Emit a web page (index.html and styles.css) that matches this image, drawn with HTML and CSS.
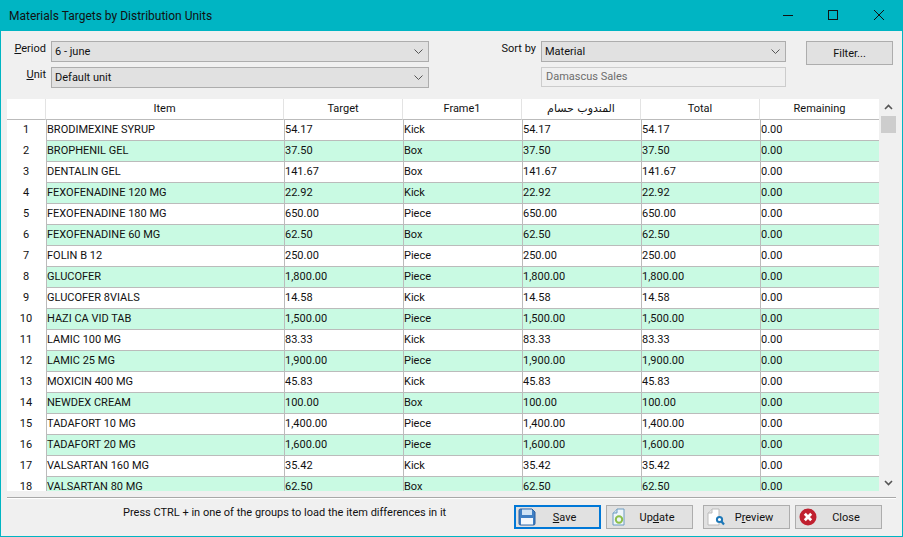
FILE: index.html
```html
<!DOCTYPE html>
<html>
<head>
    <title>Materials Targets by Distribution Units</title>
    <link rel="stylesheet" href="styles.css">
</head>
<body>
<div class="window">
    <div class="titlebar">
        <span class="title">Materials Targets by Distribution Units</span>
        <div class="win-buttons">
            <svg width="11" height="11" viewBox="0 0 11 11"><path d="M1 5.5H11" stroke="#111" fill="none"/></svg>
            <svg width="11" height="11" viewBox="0 0 11 11"><rect x="0.5" y="0.5" width="9" height="9" stroke="#111" fill="none"/></svg>
            <svg width="11" height="11" viewBox="0 0 11 11"><path d="M0 0L10 10M10 0L0 10" stroke="#111" fill="none"/></svg>
        </div>
    </div>

    <div class="filters">
        <label class="lbl"><u>P</u>eriod</label>
        <div class="combo"><span>6 - june</span><svg class="chev" width="9" height="5" viewBox="0 0 9 5"><path d="M0.5 0.5L4.5 4.5L8.5 0.5" stroke="#555" fill="none"/></svg></div>
        <label class="lbl">Sort by</label>
        <div class="combo"><span>Material</span><svg class="chev" width="9" height="5" viewBox="0 0 9 5"><path d="M0.5 0.5L4.5 4.5L8.5 0.5" stroke="#555" fill="none"/></svg></div>
        <button class="btn filter-btn">Filter...</button>

        <label class="lbl"><u>U</u>nit</label>
        <div class="combo"><span>Default unit</span><svg class="chev" width="9" height="5" viewBox="0 0 9 5"><path d="M0.5 0.5L4.5 4.5L8.5 0.5" stroke="#555" fill="none"/></svg></div>
        <span></span>
        <div class="readonly">Damascus Sales</div>
    </div>

    <div class="grid-wrap">
        <div class="grid-clip">
            <table class="grid">
                <colgroup>
                    <col class="c-num"><col class="c-item"><col class="c-val"><col class="c-val"><col class="c-val"><col class="c-val"><col class="c-val">
                </colgroup>
                <thead>
                    <tr><th></th><th>Item</th><th>Target</th><th>Frame1</th><th class="ar">المندوب حسام</th><th>Total</th><th>Remaining</th></tr>
                </thead>
                <tbody>
                    <tr><th>1</th><td>BRODIMEXINE SYRUP</td><td>54.17</td><td>Kick</td><td>54.17</td><td>54.17</td><td>0.00</td></tr>
                    <tr class="alt"><th>2</th><td>BROPHENIL GEL</td><td>37.50</td><td>Box</td><td>37.50</td><td>37.50</td><td>0.00</td></tr>
                    <tr><th>3</th><td>DENTALIN GEL</td><td>141.67</td><td>Box</td><td>141.67</td><td>141.67</td><td>0.00</td></tr>
                    <tr class="alt"><th>4</th><td>FEXOFENADINE 120 MG</td><td>22.92</td><td>Kick</td><td>22.92</td><td>22.92</td><td>0.00</td></tr>
                    <tr><th>5</th><td>FEXOFENADINE 180 MG</td><td>650.00</td><td>Piece</td><td>650.00</td><td>650.00</td><td>0.00</td></tr>
                    <tr class="alt"><th>6</th><td>FEXOFENADINE 60 MG</td><td>62.50</td><td>Box</td><td>62.50</td><td>62.50</td><td>0.00</td></tr>
                    <tr><th>7</th><td>FOLIN B 12</td><td>250.00</td><td>Piece</td><td>250.00</td><td>250.00</td><td>0.00</td></tr>
                    <tr class="alt"><th>8</th><td>GLUCOFER</td><td>1,800.00</td><td>Piece</td><td>1,800.00</td><td>1,800.00</td><td>0.00</td></tr>
                    <tr><th>9</th><td>GLUCOFER 8VIALS</td><td>14.58</td><td>Kick</td><td>14.58</td><td>14.58</td><td>0.00</td></tr>
                    <tr class="alt"><th>10</th><td>HAZI CA VID TAB</td><td>1,500.00</td><td>Piece</td><td>1,500.00</td><td>1,500.00</td><td>0.00</td></tr>
                    <tr><th>11</th><td>LAMIC 100 MG</td><td>83.33</td><td>Kick</td><td>83.33</td><td>83.33</td><td>0.00</td></tr>
                    <tr class="alt"><th>12</th><td>LAMIC 25 MG</td><td>1,900.00</td><td>Piece</td><td>1,900.00</td><td>1,900.00</td><td>0.00</td></tr>
                    <tr><th>13</th><td>MOXICIN 400 MG</td><td>45.83</td><td>Kick</td><td>45.83</td><td>45.83</td><td>0.00</td></tr>
                    <tr class="alt"><th>14</th><td>NEWDEX CREAM</td><td>100.00</td><td>Box</td><td>100.00</td><td>100.00</td><td>0.00</td></tr>
                    <tr><th>15</th><td>TADAFORT 10 MG</td><td>1,400.00</td><td>Piece</td><td>1,400.00</td><td>1,400.00</td><td>0.00</td></tr>
                    <tr class="alt"><th>16</th><td>TADAFORT 20 MG</td><td>1,600.00</td><td>Piece</td><td>1,600.00</td><td>1,600.00</td><td>0.00</td></tr>
                    <tr><th>17</th><td>VALSARTAN 160 MG</td><td>35.42</td><td>Kick</td><td>35.42</td><td>35.42</td><td>0.00</td></tr>
                    <tr class="alt"><th>18</th><td>VALSARTAN 80 MG</td><td>62.50</td><td>Box</td><td>62.50</td><td>62.50</td><td>0.00</td></tr>
                </tbody>
            </table>
        </div>
        <div class="scrollbar">
            <svg width="9" height="6" viewBox="0 0 9 6"><path d="M1 5L4.5 1.5L8 5" stroke="#555" stroke-width="1.6" fill="none"/></svg>
            <div class="thumb"></div>
            <div class="track"></div>
            <svg width="9" height="6" viewBox="0 0 9 6"><path d="M1 1L4.5 4.5L8 1" stroke="#555" stroke-width="1.6" fill="none"/></svg>
        </div>
    </div>

    <div class="separator"></div>

    <div class="footer">
        <p class="hint">Press CTRL + in one of the groups to load the item differences in it</p>
        <div class="actions">
            <button class="btn act default">
                <svg width="18" height="18" viewBox="0 0 18 18"><path d="M1 2.5A1.5 1.5 0 0 1 2.5 1H14L17 4V15.5A1.5 1.5 0 0 1 15.5 17H2.5A1.5 1.5 0 0 1 1 15.5Z" fill="#3f7fc4" stroke="#2a5f9e"/><rect x="4" y="1.5" width="10" height="5.5" fill="#cfe3f5"/><rect x="3" y="10" width="12" height="6.5" fill="#f4f8fc"/></svg>
                <span><u>S</u>ave</span>
            </button>
            <button class="btn act">
                <svg width="18" height="18" viewBox="0 0 18 18"><path d="M3 5L7 1H14V17H3Z" fill="#eef5fa" stroke="#6d9cc0"/><path d="M3 5H7V1" fill="#cfe0ec" stroke="#6d9cc0"/><circle cx="9" cy="11.5" r="3.2" fill="none" stroke="#8cbf4a" stroke-width="2"/></svg>
                <span>Up<u>d</u>ate</span>
            </button>
            <button class="btn act gap-left">
                <svg width="18" height="18" viewBox="0 0 18 18"><path d="M1 5L5 1H12V17H1Z" fill="#fff" stroke="#bbb"/><path d="M1 5H5V1" fill="#e4e4e4" stroke="#bbb"/><circle cx="12.5" cy="11.5" r="2.6" fill="#fff" stroke="#1d78b8" stroke-width="2"/><path d="M14.5 13.5L17 16.5" stroke="#1d78b8" stroke-width="2.2"/></svg>
                <span>P<u>r</u>eview</span>
            </button>
            <button class="btn act">
                <svg width="18" height="18" viewBox="0 0 18 18"><circle cx="9" cy="9" r="8.5" fill="#c0202f"/><path d="M5.8 5.8L12.2 12.2M12.2 5.8L5.8 12.2" stroke="#fff" stroke-width="2.8"/></svg>
                <span>Close</span>
            </button>
        </div>
    </div>
</div>
</body>
</html>
```

FILE: styles.css
```css
* {
    margin: 0;
    padding: 0;
    box-sizing: border-box;
}

body {
    font-family: Roboto, "DejaVu Sans", sans-serif;
    font-size: 11px;
    color: #111;
    background-color: #f0f0f0;
    overflow: hidden;
}

.window {
    width: 903px;
    height: 537px;
    border: 1px solid #00b5c3;
    border-top: 0;
    background-color: #f0f0f0;
    display: flex;
    flex-direction: column;
}

.titlebar {
    height: 31px;
    margin: 0 -1px;
    padding-left: 9px;
    background-color: #00b5c3;
    display: flex;
    align-items: center;
    justify-content: space-between;
    flex-shrink: 0;
}

.title {
    font-size: 12px;
}

.win-buttons {
    display: flex;
    gap: 35px;
    padding-right: 18px;
}

.filters {
    display: grid;
    grid-template-columns: 38px 378px 102px 245px 102px;
    grid-template-rows: 21px 21px;
    column-gap: 5px;
    row-gap: 5px;
    padding: 10px 0 0 7px;
    height: 67px;
    flex-shrink: 0;
}

.lbl {
    text-align: right;
    line-height: 16px;
    white-space: nowrap;
}

.combo {
    border: 1px solid #adadad;
    background-color: #e1e1e1;
    display: flex;
    align-items: center;
    justify-content: space-between;
    padding: 0 5px 0 3px;
}

.readonly {
    height: 20px;
    border: 1px solid #ccc;
    background-color: #f0f0f0;
    color: #6d6d6d;
    padding-left: 4px;
    line-height: 17px;
}

.btn {
    font-family: inherit;
    font-size: 11px;
    color: #111;
    border: 1px solid #adadad;
    background-color: #e1e1e1;
}

.filter-btn {
    width: 87px;
    height: 24px;
    justify-self: end;
}

.grid-wrap {
    display: flex;
    height: 392px;
    margin-left: 6px;
    margin-top: 1px;
    flex-shrink: 0;
}

.grid-clip {
    width: 873px;
    height: 392px;
    overflow: hidden;
}

.grid {
    width: 872px;
    table-layout: fixed;
    border-collapse: separate;
    border-spacing: 0;
}

.c-num { width: 39px; }
.c-item { width: 238px; }
.c-val { width: 119px; }

.grid thead th {
    height: 21px;
    font-weight: normal;
    background-color: #fff;
    border-right: 1px solid #e3e3e3;
    border-bottom: 1px solid #bbb;
    padding-bottom: 1px;
}

.grid thead th:last-child {
    border-right: 0;
}

.grid tbody th {
    font-weight: normal;
    background-color: #fff;
    height: 21px;
    padding: 0 1px 2px 0;
}

.grid td {
    height: 21px;
    padding: 0 0 1px 0;
    background-color: #fff;
    border-left: 1px solid #bbb;
    border-bottom: 1px solid #bbb;
    white-space: nowrap;
    overflow: hidden;
}

.grid tr.alt td {
    background-color: #c9fae3;
}

.ar {
    font-family: "DejaVu Sans", sans-serif;
}

.scrollbar {
    width: 16px;
    margin-left: 0;
    display: flex;
    flex-direction: column;
    align-items: center;
}

.scrollbar svg {
    flex-shrink: 0;
    margin: 5px 0;
}

.thumb {
    width: 15px;
    height: 17px;
    background-color: #cdcdcd;
    margin-top: 1px;
}

.track {
    flex: 1;
}

.separator {
    margin: 6px 6px 0 6px;
    border-top: 1px solid #a8a8a8;
    border-bottom: 1px solid #fff;
    flex-shrink: 0;
}

.footer {
    display: flex;
    padding: 6px 0 0 122px;
    flex-shrink: 0;
}

.hint {
    width: 391px;
    line-height: 16px;
    margin-right: 0;
}

.actions {
    display: flex;
    gap: 5px;
}

.act {
    width: 87px;
    height: 24px;
    display: flex;
    align-items: center;
    padding-left: 3px;
}

.act span {
    flex: 1;
    text-align: center;
    padding-right: 6px;
}

.act.default {
    border: 2px solid #0078d7;
    padding-left: 2px;
}

.gap-left {
    margin-left: 5px;
}
```
